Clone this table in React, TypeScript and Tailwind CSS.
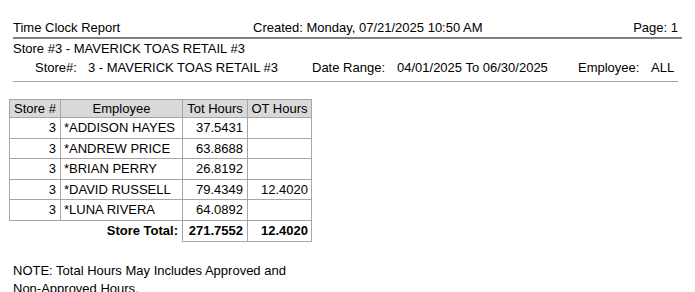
const rows = [
  { store: 3, name: '*ADDISON HAYES', tot: '37.5431', ot: '', h: 'h-[21px]' },
  { store: 3, name: '*ANDREW PRICE', tot: '63.8688', ot: '', h: 'h-[20px]' },
  { store: 3, name: '*BRIAN PERRY', tot: '26.8192', ot: '', h: 'h-[21px]' },
  { store: 3, name: '*DAVID RUSSELL', tot: '79.4349', ot: '12.4020', h: 'h-[20px]' },
  { store: 3, name: '*LUNA RIVERA', tot: '64.0892', ot: '', h: 'h-[21px]' },
];

export default function App() {
  return (
    <div className="w-[695px] h-[292px] overflow-hidden bg-white text-[13px] text-black font-['Liberation_Sans',Arial,sans-serif]">
      {/* report header */}
      <div className="pl-[13px] pr-[13px] pt-[20px]">
        <div className="flex h-[19px] leading-[16px] border-b-2 border-[#7f7f7f]">
          <span className="w-[240px]">Time Clock Report</span>
          <span>Created: Monday, 07/21/2025 10:50 AM</span>
          <span className="ml-auto pr-[4px]">Page: 1</span>
        </div>
        <div className="h-[21px] leading-[19px]">Store #3 - MAVERICK TOAS RETAIL #3</div>
        <div className="flex h-[22px] leading-[16px] pl-[22px] mr-[4px] border-b border-[#a6a6a6] whitespace-pre">
          <span className="w-[53px]">Store#:</span>
          <span className="w-[224px]">3 - MAVERICK TOAS RETAIL #3</span>
          <span className="w-[85px]">Date Range:</span>
          <span className="w-[181px]">04/01/2025 To 06/30/2025</span>
          <span className="w-[73px]">Employee:</span>
          <span>ALL</span>
        </div>
      </div>

      {/* table */}
      <div className="pl-[9px] pt-[17px]">
        <table className="table-fixed border-collapse leading-[16px]">
          <colgroup>
            <col className="w-[51px]" />
            <col className="w-[122px]" />
            <col className="w-[65px]" />
            <col className="w-[64px]" />
          </colgroup>
          <thead>
            <tr className="h-[18px] bg-[#d9d9d9]">
              <th className="border border-[#a6a6a6] font-normal text-center p-0">Store #</th>
              <th className="border border-[#a6a6a6] font-normal text-center p-0">Employee</th>
              <th className="border border-[#a6a6a6] font-normal text-center p-0">Tot Hours</th>
              <th className="border border-[#a6a6a6] font-normal text-center p-0">OT Hours</th>
            </tr>
          </thead>
          <tbody>
            {rows.map((r) => (
              <tr key={r.name} className={r.h}>
                <td className="border border-[#a6a6a6] text-right pr-[4px] p-0">{r.store}</td>
                <td className="border border-[#a6a6a6] text-left pl-[3px] p-0 whitespace-nowrap">{r.name}</td>
                <td className="border border-[#a6a6a6] text-right pr-[4px] p-0">{r.tot}</td>
                <td className="border border-[#a6a6a6] text-right pr-[3px] p-0">{r.ot}</td>
              </tr>
            ))}
            <tr className="h-[21px] font-bold">
              <td colSpan={2} className="text-right pr-[4px] p-0">Store Total:</td>
              <td className="border border-[#a6a6a6] text-right pr-[4px] p-0">271.7552</td>
              <td className="border border-[#a6a6a6] text-right pr-[3px] p-0">12.4020</td>
            </tr>
          </tbody>
        </table>
      </div>

      {/* note */}
      <div className="pl-[13px] pt-[20px] leading-[18px] w-[312px]">
        NOTE: Total Hours May Includes Approved and Non-Approved Hours.
      </div>
    </div>
  );
}
